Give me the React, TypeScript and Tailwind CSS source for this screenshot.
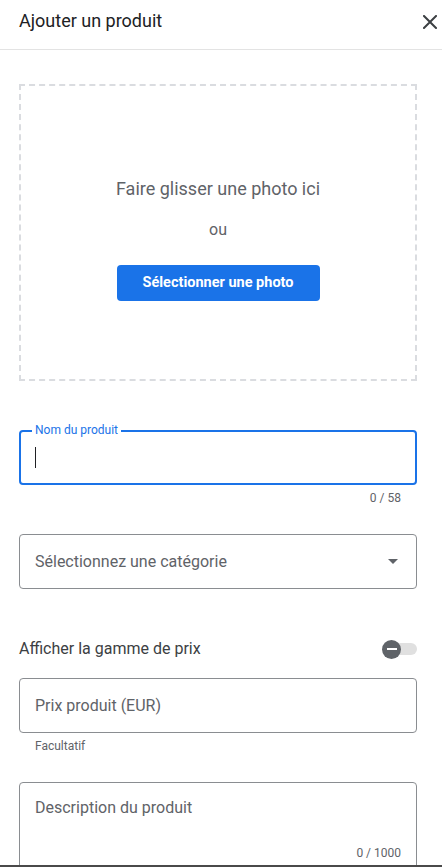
export default function App() {
    return (
        <div className="relative w-[442px] h-[867px] overflow-hidden bg-white font-['Roboto',sans-serif] text-[#3c4043]">

            {/* En-tête */}
            <div className="flex items-start justify-between h-[50px] pl-[19px] pr-[5px] pt-[8px] border-b border-[#e3e3e3]">
                <h1 className="text-[18px] leading-[26px] text-[#202124]">Ajouter un produit</h1>
                <button type="button" className="mt-[7px] w-[14px] h-[14px] flex items-center justify-center">
                    <svg width="14" height="14" viewBox="0 0 14 14">
                        <path d="M1 1 L13 13 M13 1 L1 13" stroke="#3c4043" strokeWidth="2" strokeLinecap="square" />
                    </svg>
                </button>
            </div>

            <div className="flex flex-col pl-[19px] w-[417px]">

                {/* Zone photo */}
                <div className="mt-[34px] h-[297px] border-2 border-dashed border-[#dadce0] flex flex-col items-center pt-[91px]">
                    <p className="text-[18px] leading-[24px] text-[#5f6368]">Faire glisser une photo ici</p>
                    <p className="mt-[17px] text-[16px] leading-[24px] text-[#5f6368]">ou</p>
                    <button
                        type="button"
                        className="mt-[23px] w-[203px] h-[36px] rounded-[4px] bg-[#1a73e8] text-white text-[14.5px] font-bold"
                    >
                        Sélectionner une photo
                    </button>
                </div>

                {/* Nom du produit */}
                <div className="relative mt-[49px] h-[55px] border-2 border-[#1a73e8] rounded-[4px] flex items-center pl-[14px]">
                    <span className="absolute left-[11px] -top-[9px] px-[3px] bg-white text-[12px] leading-[14px] text-[#1a73e8]">
                        Nom du produit
                    </span>
                    <span className="w-px h-[21px] bg-[#202124]" />
                </div>
                <p className="mt-[5px] pr-[16px] text-right text-[12px] leading-[16px] text-[#5f6368]">0 / 58</p>

                {/* Catégorie */}
                <div className="mt-[28px] h-[55px] border border-[#8a8d91] rounded-[4px] flex items-center justify-between pl-[15px] pr-[18px]">
                    <span className="text-[16px] text-[#5f6368]">Sélectionnez une catégorie</span>
                    <svg width="10" height="5" viewBox="0 0 10 5">
                        <path d="M0 0 L10 0 L5 5 Z" fill="#5f6368" />
                    </svg>
                </div>

                {/* Gamme de prix */}
                <div className="mt-[48px] h-[24px] flex items-center justify-between">
                    <span className="text-[16px] text-[#3c4043]">Afficher la gamme de prix</span>
                    <div className="relative w-[36px] h-[19px] flex items-center">
                        <div className="absolute left-[4px] right-0 h-[12px] rounded-full bg-[#e0e0e0]" />
                        <div className="relative ml-[1px] w-[19px] h-[19px] rounded-full bg-[#5f6368] flex items-center justify-center">
                            <span className="w-[10px] h-[2px] bg-white" />
                        </div>
                    </div>
                </div>

                {/* Prix */}
                <div className="mt-[17px] h-[55px] border border-[#8a8d91] rounded-[4px] flex items-center pl-[15px]">
                    <span className="text-[16px] text-[#5f6368]">Prix produit (EUR)</span>
                </div>
                <p className="mt-[5px] pl-[16px] text-[12px] leading-[16px] text-[#5f6368]">Facultatif</p>

                {/* Description */}
                <div className="mt-[28px] h-[130px] border border-[#8a8d91] rounded-[4px] flex flex-col pl-[15px] pr-[15px] pt-[13px]">
                    <span className="text-[16px] leading-[24px] text-[#5f6368]">Description du produit</span>
                    <span className="mt-[25px] text-right text-[12px] leading-[16px] text-[#5f6368]">0 / 1000</span>
                </div>
            </div>

            <div className="absolute bottom-0 left-0 w-full h-[2px] bg-[#4a4a4a]" />
        </div>
    );
}
